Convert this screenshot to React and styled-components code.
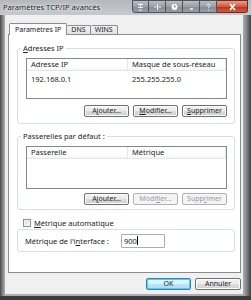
import React from "react";
import styled, { createGlobalStyle, css } from "styled-components";

const GlobalStyle = createGlobalStyle`
  html, body {
    margin: 0;
    padding: 0;
    background: #ffffff;
  }
  body {
    font-family: "Noto Sans", "Open Sans", sans-serif;
    font-size: 7.5px;
    color: #222222;
  }
`;

const Window = styled.div`
  width: 251px;
  height: 300px;
  box-sizing: border-box;
  display: flex;
  flex-direction: column;
  background: linear-gradient(90deg, #4a4a4a 0, #8d8d8d 3px, #a9acb0 5px, #a9acb0 calc(100% - 8px), #8d8d8d calc(100% - 5px), #3e3e3e 100%);
  border-bottom: 4px solid #3c3c3c;
`;

const TitleBar = styled.div`
  height: 15px;
  display: flex;
  align-items: flex-start;
  justify-content: space-between;
  background: linear-gradient(180deg, #b4b8bd 0, #c6cace 100%);
  padding-left: 3px;
  padding-right: 3px;
`;

const Title = styled.div`
  font-size: 7.6px;
  line-height: 15px;
  color: #1a1a1a;
  text-shadow: 0 0 4px #ffffff, 0 0 2px #ffffff;
`;

const Caption = styled.div`
  display: flex;
  height: 13px;
`;

const CapButton = styled.div`
  width: 17px;
  height: 13px;
  box-sizing: border-box;
  border: 1px solid #4f545b;
  border-left-width: 0;
  background: linear-gradient(180deg, #b9bec4 0, #9aa0a8 50%, #858b93 51%, #979da5 100%);
  display: flex;
  align-items: center;
  justify-content: center;
  ${({ first }) => first && css`border-left-width: 1px; border-bottom-left-radius: 3px;`}
`;

const CloseButton = styled(CapButton)`
  width: 31px;
  border-bottom-right-radius: 3px;
  background: linear-gradient(180deg, #e3a08f 0, #cf5a45 50%, #b8331c 51%, #d25a3e 100%);
  border-color: #6b2a22;
`;

const Client = styled.div`
  flex: 1;
  margin: 0 8px 2px 5px;
  background: #f0f0f0;
  padding: 8px 2px 0 3px;
  display: flex;
  flex-direction: column;
`;

const TabStrip = styled.div`
  display: flex;
  align-items: flex-end;
  height: 11px;
  padding-left: 1px;
  position: relative;
  z-index: 1;
`;

const Tab = styled.div`
  height: 8px;
  padding: 0 4px;
  border: 1px solid #898c95;
  border-bottom: none;
  border-left-width: 0;
  border-radius: 2px 2px 0 0;
  background: linear-gradient(180deg, #f2f2f2 0, #e3e3e3 100%);
  font-size: 7px;
  line-height: 8px;
  color: #222;
  ${({ active }) =>
    active &&
    css`
      height: 11px;
      line-height: 11px;
      border-left-width: 1px;
      background: #ffffff;
      padding: 0 5px;
      margin-bottom: -1px;
    `}
`;

const Panel = styled.div`
  height: 239px;
  box-sizing: border-box;
  background: #ffffff;
  border: 1px solid #898c95;
  padding: 13px 5px 0 8px;
  display: flex;
  flex-direction: column;
`;

const Group = styled.div`
  position: relative;
  border: 1px solid #d5dfe5;
  border-radius: 3px;
  margin-top: ${({ gap }) => gap}px;
  height: ${({ h }) => h}px;
  box-sizing: border-box;
  padding: 9px 7px 0 8px;
  display: flex;
  flex-direction: column;
`;

const Legend = styled.div`
  position: absolute;
  top: -6px;
  left: 3px;
  padding: 0 2px;
  background: #ffffff;
  line-height: 10px;
`;

const ListBox = styled.div`
  height: ${({ h }) => h}px;
  box-sizing: border-box;
  border: 1px solid #828790;
  background: #ffffff;
`;

const ListHeader = styled.div`
  display: flex;
  height: 11px;
  border-bottom: 1px solid #e3e7ec;
  background: linear-gradient(180deg, #ffffff 0, #ffffff 70%, #f3f4f6 100%);
`;

const HeadCell = styled.div`
  width: ${({ w }) => (w ? `${w}px` : "auto")};
  flex: ${({ w }) => (w ? "none" : 1)};
  box-sizing: border-box;
  padding-left: 4px;
  line-height: 11px;
  border-right: 1px solid #e3e7ec;
`;

const ListRow = styled.div`
  display: flex;
  height: 11px;
  margin-top: 3px;
`;

const Cell = styled.div`
  width: ${({ w }) => (w ? `${w}px` : "auto")};
  flex: ${({ w }) => (w ? "none" : 1)};
  padding-left: 4px;
  box-sizing: border-box;
  line-height: 11px;
`;

const ButtonRow = styled.div`
  display: flex;
  justify-content: flex-end;
  gap: 4px;
  margin-top: ${({ gap }) => gap}px;
`;

const Button = styled.div`
  width: ${({ w }) => w || 45}px;
  height: 12px;
  box-sizing: border-box;
  border: 1px solid #707070;
  border-radius: 2px;
  background: linear-gradient(180deg, #f2f2f2 0, #ebebeb 50%, #dddddd 51%, #cfcfcf 100%);
  box-shadow: inset 0 0 0 1px #fcfcfc;
  text-align: center;
  line-height: 10px;
  font-size: 7px;
  color: #1e1e1e;
  ${({ disabled }) =>
    disabled &&
    css`
      border-color: #adb2b5;
      background: #f4f4f4;
      color: #9a9a9a;
      box-shadow: none;
    `}
  ${({ primary }) =>
    primary &&
    css`
      border-color: #3c7fb1;
      background: linear-gradient(180deg, #eaf6fd 0, #d9f0fc 50%, #bee6fd 51%, #a7d9f5 100%);
      box-shadow: inset 0 0 0 1px #48d0fb;
    `}
`;

const CheckRow = styled.div`
  display: flex;
  align-items: center;
  gap: 3px;
  margin: 8px 0 0 6px;
  height: 9px;
`;

const CheckBox = styled.div`
  width: 8px;
  height: 8px;
  box-sizing: border-box;
  border: 1px solid #8e8f8f;
  background: linear-gradient(135deg, #dcdcdc 0, #f6f6f6 100%);
  box-shadow: inset 0 0 0 1px #f4f4f4;
`;

const MetricGroup = styled.div`
  margin-top: 2px;
  height: 23px;
  box-sizing: border-box;
  border: 1px solid #d5dfe5;
  border-radius: 3px;
  display: flex;
  align-items: center;
  padding-left: 7px;
`;

const MetricLabel = styled.div`
  width: 96px;
`;

const Input = styled.div`
  width: 44px;
  height: 14px;
  box-sizing: border-box;
  border: 1px solid #abadb3;
  border-radius: 1px;
  padding-left: 2px;
  line-height: 12px;
  display: flex;
  align-items: center;
`;

const Caret = styled.span`
  display: inline-block;
  width: 1px;
  height: 9px;
  background: #000;
`;

const Footer = styled.div`
  display: flex;
  justify-content: flex-end;
  gap: 4px;
  padding-top: 5px;
`;

const Mnemonic = styled.span`
  text-decoration: underline;
`;

const GlyphSvg = ({ children }) => (
  <svg width="9" height="8" viewBox="0 0 9 8" fill="none">
    {children}
  </svg>
);

export default function App() {
  return (
    <>
      <GlobalStyle />
      <Window>
        <TitleBar>
          <Title>Paramètres TCP/IP avancés</Title>
          <Caption>
            <CapButton first>
              <GlyphSvg>
                <path d="M2 1.5h5M4.5 0.5v3M2 4.5h5M3 7h3" stroke="#fff" strokeWidth="0.9" />
              </GlyphSvg>
            </CapButton>
            <CapButton>
              <GlyphSvg>
                <path d="M1 4h2.5M5.5 4h2.5M4.5 1v6" stroke="#fff" strokeWidth="0.9" />
              </GlyphSvg>
            </CapButton>
            <CapButton>
              <GlyphSvg>
                <circle cx="4.5" cy="4" r="3" fill="#fff" />
                <path d="M4.5 2v2h1.5" stroke="#6a6f76" strokeWidth="0.8" />
              </GlyphSvg>
            </CapButton>
            <CapButton>
              <GlyphSvg>
                <path d="M3 6h3" stroke="#fff" strokeWidth="1.4" />
              </GlyphSvg>
            </CapButton>
            <CapButton>
              <GlyphSvg>
                <path d="M3 2.3c0-1.3 3-1.3 3 0 0 1-1.5 1.2-1.5 2.4M4.5 6.3v1" stroke="#fff" strokeWidth="1" />
              </GlyphSvg>
            </CapButton>
            <CloseButton>
              <GlyphSvg>
                <path d="M2 1l5 6M7 1l-5 6" stroke="#fff" strokeWidth="1.6" />
              </GlyphSvg>
            </CloseButton>
          </Caption>
        </TitleBar>
        <Client>
          <TabStrip>
            <Tab active>Paramètres IP</Tab>
            <Tab>DNS</Tab>
            <Tab>WINS</Tab>
          </TabStrip>
          <Panel>
            <Group gap={0} h={76}>
              <Legend><Mnemonic>A</Mnemonic>dresses IP</Legend>
              <ListBox h={41}>
                <ListHeader>
                  <HeadCell w={101}>Adresse IP</HeadCell>
                  <HeadCell>Masque de sous-réseau</HeadCell>
                </ListHeader>
                <ListRow>
                  <Cell w={101}>192.168.0.1</Cell>
                  <Cell>255.255.255.0</Cell>
                </ListRow>
              </ListBox>
              <ButtonRow gap={6}>
                <Button>A<Mnemonic>j</Mnemonic>outer...</Button>
                <Button><Mnemonic>M</Mnemonic>odifier...</Button>
                <Button><Mnemonic>S</Mnemonic>upprimer</Button>
              </ButtonRow>
            </Group>
            <Group gap={12} h={74}>
              <Legend>Passerelles par défaut :</Legend>
              <ListBox h={43}>
                <ListHeader>
                  <HeadCell w={101}>Passerelle</HeadCell>
                  <HeadCell>Métrique</HeadCell>
                </ListHeader>
              </ListBox>
              <ButtonRow gap={4}>
                <Button>A<Mnemonic>j</Mnemonic>outer...</Button>
                <Button disabled>Modi<Mnemonic>f</Mnemonic>ier...</Button>
                <Button disabled>Supp<Mnemonic>r</Mnemonic>imer</Button>
              </ButtonRow>
            </Group>
            <CheckRow>
              <CheckBox />
              <span><Mnemonic>M</Mnemonic>étrique automatique</span>
            </CheckRow>
            <MetricGroup>
              <MetricLabel>Métrique de l'i<Mnemonic>n</Mnemonic>terface :</MetricLabel>
              <Input>
                900
                <Caret />
              </Input>
            </MetricGroup>
          </Panel>
          <Footer>
            <Button primary w={45}>OK</Button>
            <Button w={46}>Annuler</Button>
          </Footer>
        </Client>
      </Window>
    </>
  );
}
